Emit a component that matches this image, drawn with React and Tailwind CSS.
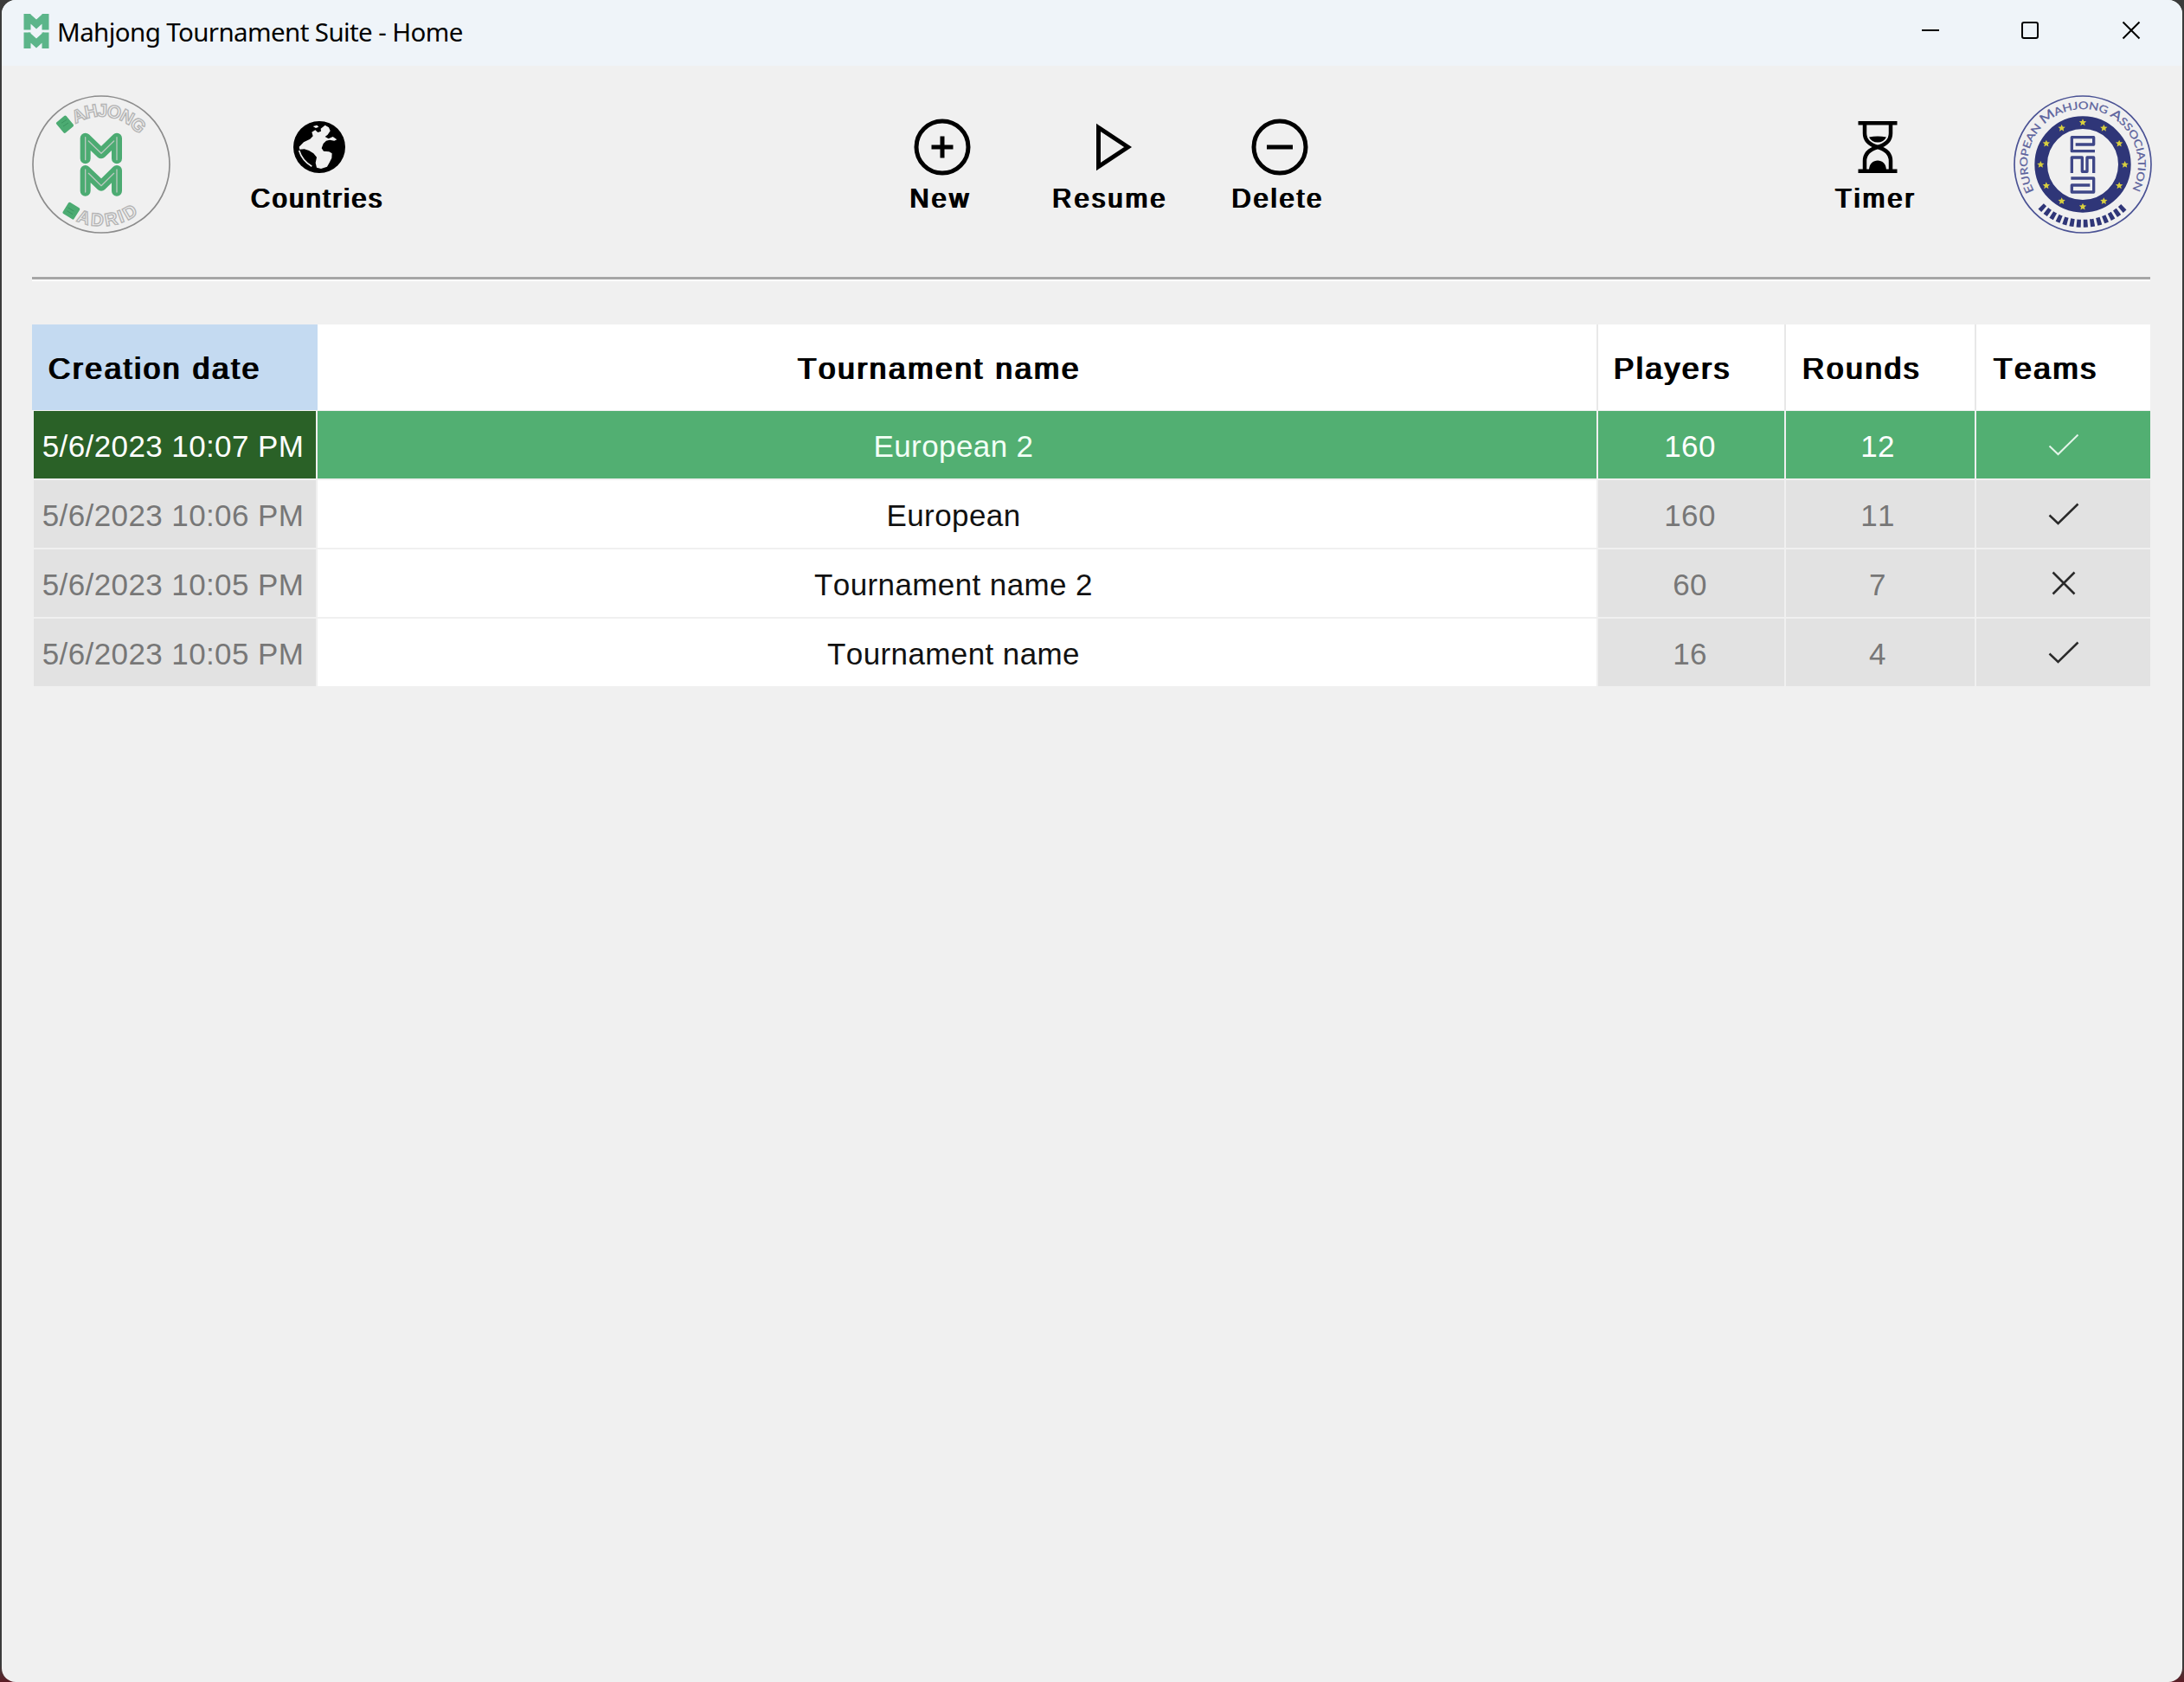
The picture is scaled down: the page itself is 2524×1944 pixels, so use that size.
import React from "react";

const SHARP = "[font-kerning:none] whitespace-nowrap";
const BOLD = "[text-shadow:1px_0_0_currentColor,2px_0_0_currentColor]";

const rows = [
  { date: "5/6/2023 10:07 PM", name: "European 2", players: 160, rounds: 12, teams: true, selected: true },
  { date: "5/6/2023 10:06 PM", name: "European", players: 160, rounds: 11, teams: true },
  { date: "5/6/2023 10:05 PM", name: "Tournament name 2", players: 60, rounds: 7, teams: false },
  { date: "5/6/2023 10:05 PM", name: "Tournament name", players: 16, rounds: 4, teams: true },
];

const GRID = "grid grid-cols-[330px_1480px_217px_220px_201px]";

function AppIcon() {
  return (
    <svg width="30" height="40" viewBox="0 0 30 40" fill="none" stroke="#5cb58a" strokeWidth="8">
      <path d="M4.500 0V18.500M25.500 0V18.500M4 2L15 12L26 2M4.500 21.500V40M25.500 21.500V40M4 24L15 34L26 24" />
    </svg>
  );
}

function ClubLogo() {
  return (
    <svg width="160" height="160" viewBox="51 44 480 480" fill="none">
      <defs>
        <path id="clubTop" d="M125 284A166 166 0 0 1 457 284" />
        <path id="clubBottom" d="M77 284A214 214 0 0 0 505 284" />
      </defs>
      <circle cx="291" cy="284" r="237" stroke="#8c8c8c" strokeWidth="5" />
      <g fontFamily="Liberation Sans, sans-serif" fontWeight="700" stroke="#b4b4b4" strokeWidth="4" fontSize="62">
        <text><textPath href="#clubTop" startOffset="166" textLength="244">AHJONG</textPath></text>
        <text><textPath href="#clubBottom" startOffset="246" textLength="228">ADRID</textPath></text>
      </g>
      <g fill="#4cab72">
        <rect x="143" y="121" width="44" height="48" rx="5" transform="rotate(-40 165 145)" />
        <rect x="164" y="422" width="46" height="46" rx="5" transform="rotate(32 187 445)" />
      </g>
      <path d="M153 141l18 -12M159 152l18 -12M176 434l20 12M172 445l20 12" stroke="#3a9560" strokeWidth="3" />
      <g strokeLinecap="round" strokeLinejoin="round">
        <g stroke="#4cab72" strokeWidth="36">
          <path d="M236 264V193L291 246L345 193V264" />
          <path d="M236 376V305L291 358L345 305V376" />
        </g>
        <g stroke="#b9c9bf" strokeWidth="4">
          <path d="M236 268V190M247 203L291 246L335 203M345 190V268" />
          <path d="M236 380V302M247 315L291 358L335 315M345 302V380" />
        </g>
      </g>
    </svg>
  );
}

const STAR_ANGLES = [0, 30, 60, 90, 120, 150, 180, 210, 240, 270, 300, 330];

function AssociationLogo() {
  return (
    <svg width="160" height="160" viewBox="51 44 480 480" fill="none">
      <defs>
        <path id="ringText" d="M124.7 380A192 192 0 1 1 457.3 380" />
      </defs>
      <circle cx="291" cy="284" r="237" stroke="#4a5294" strokeWidth="5" />
      <circle cx="291" cy="284" r="145" stroke="#2f3678" strokeWidth="44" />
      <g fill="#d8cf3e">
        {STAR_ANGLES.map((a) => (
          <path
            key={a}
            transform={`rotate(${a} 291 284) rotate(${-a} 291 138)`}
            d="M291 126l3.6 8 9 .8-6.8 5.800 2 8.800-7.800-4.700-7.800 4.700 2-8.800-6.800-5.800 9-.8z"
          />
        ))}
      </g>
      <path d="M146 429A205 205 0 0 0 436 429" stroke="#2f3678" strokeWidth="27" strokeDasharray="14.500 8.800" />
      <text fontFamily="Lato, sans-serif" fontSize="36" fill="#5b629c" stroke="#5b629c" strokeWidth="0.8">
        <textPath href="#ringText" startOffset="4" textLength="790" lengthAdjust="spacingAndGlyphs">
          <tspan fontSize="40">E</tspan>UROPEAN <tspan fontSize="45">M</tspan>AHJONG <tspan fontSize="45">A</tspan>SSOCIATION
        </textPath>
      </text>
      <g stroke="#3f4788" strokeWidth="10" strokeLinejoin="round">
        <path d="M333 238H253V190H329V215H266" />
        <path d="M253 314V260H289V309H306V260H329V314" />
        <path d="M250 332H329V380H253V356H316" />
      </g>
    </svg>
  );
}

function GlobeIcon() {
  return (
    <svg width="66" height="66" viewBox="199 51 198 198">
      <circle cx="298" cy="150" r="90" fill="#000" />
      <path
        fill="#f0f0f0"
        d="M228 149L244 133L266 122L276 112L272 98L284 91L293 99L304 95L303 86L318 74L331 82L336 94L327 107L318 114L330 121L345 114L359 124L350 128L334 125L322 128L312 138L306 154L313 164L332 166L342 172L341 188L333 204L325 218L304 225L289 221L285 205L289 185L278 172L262 162L246 157L230 158ZM276 78L290 74L296 80L286 84Z"
      />
      <path d="M228 162Q238 196 272 217" fill="none" stroke="#f0f0f0" strokeWidth="5" />
    </svg>
  );
}

function PlusCircle() {
  return (
    <svg width="66" height="66" viewBox="0 0 66 66" fill="none" stroke="#000" strokeWidth="5">
      <circle cx="33" cy="33" r="30" />
      <path d="M33 20.500V45.500M20.500 33H45.500" />
    </svg>
  );
}

function MinusCircle() {
  return (
    <svg width="66" height="66" viewBox="0 0 66 66" fill="none" stroke="#000" strokeWidth="5">
      <circle cx="33" cy="33" r="30" />
      <path d="M18 33H48" />
    </svg>
  );
}

function PlayIcon() {
  return (
    <svg width="66" height="66" viewBox="0 0 66 66" fill="none" stroke="#000" strokeWidth="5">
      <path d="M17.500 10.500V55.500L51.500 33Z" />
    </svg>
  );
}

function HourglassIcon() {
  return (
    <svg width="66" height="66" viewBox="0 0 66 66" fill="none" stroke="#000" strokeWidth="4.5">
      <path d="M10.500 5.300H55.500M10.500 60.700H55.500" />
      <path d="M18 5V17C18 27 26 31 33 33C40 31 48 27 48 17V5M18 61V49C18 39 26 35 33 33C40 35 48 39 48 49V61" />
      <path d="M23 21.500Q33 19.500 43 21.500Q40 27.500 33 27.500Q26 27.500 23 21.500ZM23 60C23 52 28 48.500 33 48.500C38 48.500 43 52 43 60Z" fill="#000" stroke="none" />
    </svg>
  );
}

function ToolButton({ icon, label, className }) {
  return (
    <button className={`mt-[61px] flex flex-none flex-col items-center ${className}`}>
      <span className="pl-[6px]">{icon}</span>
      <span className={`mt-[8px] text-[30.5px] leading-[36px] ${SHARP} ${BOLD}`}>{label}</span>
    </button>
  );
}

function TeamsMark({ on, selected }) {
  return (
    <svg width="36" height="30" viewBox="0 0 36 30" fill="none" stroke={selected ? "#e4f5ea" : "#2a2a2a"} strokeWidth={selected ? 2 : 2.5}>
      {on ? <path d="M1.500 15.500L11.500 25L34.500 2.500" /> : <path d="M5.500 1.500L30.500 26.500M30.500 1.500L5.500 26.500" />}
    </svg>
  );
}

function HeadCell({ children, className }) {
  return <div className={`flex h-[99px] items-center pt-[3px] ${className}`}>{children}</div>;
}

function Row({ row }) {
  const s = row.selected;
  const cell = "flex h-[80px] items-center justify-center border-y border-r-2 border-[#f0f0f0] pt-[4px]";
  const side = s ? "bg-[#52af72] text-white" : "bg-[#e2e2e2] text-[#777777]";
  return (
    <div className={GRID}>
      <div className={`${cell} border-l-2 ${s ? "bg-[#2a6127] text-white" : "bg-[#e2e2e2] text-[#777777]"}`}>
        <span className="pr-[4px]">{row.date}</span>
      </div>
      <div className={`${cell} ${s ? "bg-[#52af72] text-[#f2fff6]" : "bg-white text-[#111111]"}`}>
        <span className="pr-[8px]">{row.name}</span>
      </div>
      <div className={`${cell} ${side}`}>
        <span className="pr-[3px]">{row.players}</span>
      </div>
      <div className={`${cell} ${side}`}>
        <span className="pr-[6px]">{row.rounds}</span>
      </div>
      <div className={`flex h-[80px] items-center justify-center border-y border-[#f0f0f0] pt-[1px] ${side}`}>
        <TeamsMark on={row.teams} selected={s} />
      </div>
    </div>
  );
}

export default function App() {
  return (
    <div className="h-[1944px] w-[2524px] overflow-hidden bg-[#3b3b3b] bg-linear-to-b from-[#3b3b3b] from-99% to-[#5c1c26] to-100% px-[2px] font-['Liberation_Sans',Arial,sans-serif] text-black">
      <div className="flex h-full flex-col overflow-hidden rounded-[16px] bg-[#f0f0f0]">
        <header className="flex h-[76px] flex-none items-start justify-between bg-[#eff4f9]">
          <div className="flex pt-[16px] pl-[25px]">
            <AppIcon />
            <h1 className="mt-[1px] ml-[9px] font-['Noto_Sans','Open_Sans',sans-serif] text-[29.5px] leading-[40px] tracking-[-0.6px] whitespace-nowrap">
              Mahjong Tournament Suite - Home
            </h1>
          </div>
          <div className="flex pt-[24px] pr-[48px]">
            <svg className="mr-[93px]" width="22" height="22" viewBox="0 0 22 22" stroke="#000" strokeWidth="2"><path d="M1 11H21" /></svg>
            <svg className="mr-[95px]" width="22" height="22" viewBox="0 0 22 22" fill="none" stroke="#000" strokeWidth="2"><rect x="2" y="2" width="18" height="18" rx="2" /></svg>
            <svg width="22" height="22" viewBox="0 0 22 22" stroke="#000" strokeWidth="2"><path d="M1.500 1.500L20.500 20.500M20.500 1.500L1.500 20.500" /></svg>
          </div>
        </header>

        <nav className="mx-[35px] flex h-[244px] flex-none items-start">
          <div className="mt-[34px] flex-none"><ClubLogo /></div>
          <ToolButton icon={<GlobeIcon />} label="Countries" className="ml-[83px] w-[172px] tracking-[2.6px]" />
          <ToolButton icon={<PlusCircle />} label="New" className="ml-[574px] w-[120px] tracking-[3.4px]" />
          <ToolButton icon={<PlayIcon />} label="Resume" className="ml-[56px] w-[160px] tracking-[3.3px]" />
          <ToolButton icon={<MinusCircle />} label="Delete" className="ml-[54px] w-[120px] tracking-[3.1px]" />
          <ToolButton icon={<HourglassIcon />} label="Timer" className="ml-[571px] w-[120px] tracking-[3.2px]" />
          <div className="mt-[34px] ml-[100px] flex-none"><AssociationLogo /></div>
        </nav>

        <div className="mr-[37px] ml-[35px] h-[5px] flex-none border-t-3 border-b-2 border-t-[#a6a6a6] border-b-white" />

        <main className={`mt-[50px] ml-[35px] w-[2448px] text-[35px] leading-[40px] tracking-[0.4px] ${SHARP}`}>
          <div className={`${GRID} tracking-[2.75px] ${BOLD}`}>
            <HeadCell className="bg-[#c4daf1] pl-[18px]">Creation date</HeadCell>
            <HeadCell className="justify-center border-r-2 border-[#e8e8e8] bg-white pr-[43px]">Tournament name</HeadCell>
            <HeadCell className="border-r-2 border-[#e8e8e8] bg-white pl-[17px]">Players</HeadCell>
            <HeadCell className="border-r-2 border-[#e8e8e8] bg-white pl-[18px]">Rounds</HeadCell>
            <HeadCell className="bg-white pl-[19px]">Teams</HeadCell>
          </div>
          {rows.map((row, i) => (
            <Row key={i} row={row} />
          ))}
        </main>
      </div>
    </div>
  );
}
